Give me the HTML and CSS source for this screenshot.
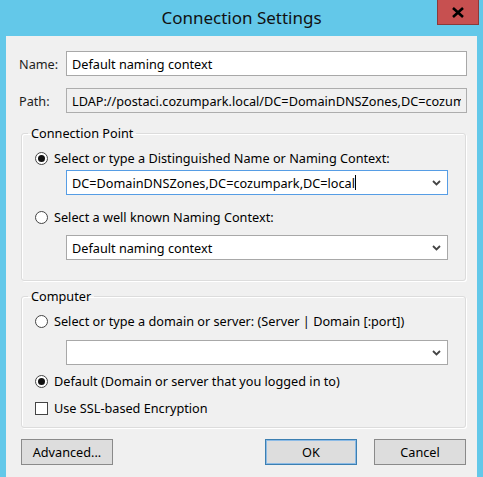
FILE: index.html
```html
<!DOCTYPE html>
<html lang="en">
<head>
  <meta charset="UTF-8">
  <meta name="viewport" content="width=device-width, initial-scale=1.0">
  <title>Connection Settings</title>
  <link rel="stylesheet" href="styles.css">
</head>
<body>

  <div class="window">
    <!-- Title bar -->
    <header class="titlebar">
      <span></span>
      <h1 class="title">Connection Settings</h1>
      <button class="close-button" type="button" aria-label="Close">
        <svg width="14" height="11" viewBox="0 0 14 11">
          <path d="M2 1 L12 10 M12 1 L2 10" stroke="#000" stroke-width="2.6" fill="none"/>
        </svg>
      </button>
    </header>

    <form class="client" onsubmit="return false;">
      <div class="field-row first">
        <label for="conn-name">Name:</label>
        <input type="text" id="conn-name" class="text-box" value="Default naming context">
      </div>
      <div class="field-row">
        <label for="conn-path">Path:</label>
        <input type="text" id="conn-path" class="text-box readonly" value="LDAP://postaci.cozumpark.local/DC=DomainDNSZones,DC=cozumpark,DC=local" readonly>
      </div>

      <!-- Connection Point -->
      <fieldset class="group group-point">
        <legend>Connection Point</legend>
        <label class="option">
          <input type="radio" name="point" checked>
          <span>Select or type a Distinguished Name or Naming Context:</span>
        </label>
        <div class="combo focused">
          <span class="combo-text">DC=DomainDNSZones,DC=cozumpark,DC=local<span class="caret"></span></span>
          <svg class="combo-arrow" width="9" height="6" viewBox="0 0 9 6">
            <path d="M1 1 L4.5 4.5 L8 1" stroke="#444" stroke-width="1.8" fill="none"/>
          </svg>
        </div>
        <label class="option">
          <input type="radio" name="point">
          <span>Select a well known Naming Context:</span>
        </label>
        <div class="combo">
          <span class="combo-text">Default naming context</span>
          <svg class="combo-arrow" width="9" height="6" viewBox="0 0 9 6">
            <path d="M1 1 L4.5 4.5 L8 1" stroke="#444" stroke-width="1.8" fill="none"/>
          </svg>
        </div>
      </fieldset>

      <!-- Computer -->
      <fieldset class="group group-computer">
        <legend>Computer</legend>
        <label class="option">
          <input type="radio" name="computer">
          <span>Select or type a domain or server: (Server | Domain [:port])</span>
        </label>
        <div class="combo">
          <span class="combo-text"></span>
          <svg class="combo-arrow" width="9" height="6" viewBox="0 0 9 6">
            <path d="M1 1 L4.5 4.5 L8 1" stroke="#444" stroke-width="1.8" fill="none"/>
          </svg>
        </div>
        <label class="option">
          <input type="radio" name="computer" checked>
          <span>Default (Domain or server that you logged in to)</span>
        </label>
        <label class="option check">
          <input type="checkbox">
          <span>Use SSL-based Encryption</span>
        </label>
      </fieldset>

      <div class="button-row">
        <button type="button" class="button">Advanced...</button>
        <button type="submit" class="button default ok">OK</button>
        <button type="button" class="button">Cancel</button>
      </div>
    </form>
  </div>

</body>
</html>
```

FILE: styles.css
```css
/* Window frame */
body {
  margin: 0;
  background-color: #63c8e9;
  font-family: 'Noto Sans', sans-serif;
  font-size: 12.7px;
  color: #000;
}

.window {
  width: 483px;
  height: 477px;
  display: flex;
  flex-direction: column;
}

.titlebar {
  height: 36px;
  display: grid;
  grid-template-columns: 1fr auto 1fr;
  align-items: start;
}

.title {
  margin: 7px 0 0;
  font-size: 17px;
  font-weight: 400;
  line-height: 22px;
  color: #111;
}

.close-button {
  justify-self: end;
  margin-right: 4px;
  width: 42px;
  height: 25px;
  padding: 0;
  border: 1px solid #8a3a3a;
  border-top: 0;
  background-color: #c75050;
  display: flex;
  align-items: center;
  justify-content: center;
}

/* Client area */
.client {
  flex: 1;
  margin: 0 6px;
  background-color: #f0f0f0;
  display: flex;
  flex-direction: column;
}

.field-row {
  display: flex;
  align-items: center;
  margin-top: 12px;
  padding-left: 13px;
}

.field-row.first {
  margin-top: 15px;
}

.field-row label {
  width: 47px;
  color: #1e1e1e;
}

.text-box {
  box-sizing: border-box;
  width: 401px;
  height: 25px;
  padding: 0 5px;
  border: 1px solid #a8a8a8;
  background-color: #fff;
  font-family: inherit;
  font-size: 12.7px;
  color: #000;
  outline: none;
}

.text-box.readonly {
  background-color: #f0f0f0;
  border-color: #adadad;
}

/* Group boxes */
.group {
  box-sizing: border-box;
  width: 445px;
  margin: 12px 0 0 15px;
  padding: 9px 0 0 0;
  border: 1px solid #dcdcdc;
  border-radius: 3px;
  box-shadow: inset 1px 1px 0 #fff, 1px 1px 0 #fff;
}

.group legend {
  margin-left: 6px;
  padding: 0 3px;
  line-height: 16px;
}

.group-point {
  height: 156px;
}

.group-computer {
  margin-top: 7px;
  height: 140px;
}

.option {
  display: flex;
  align-items: center;
  height: 16px;
  padding-left: 13px;
  gap: 6px;
}

.option input {
  appearance: none;
  margin: 0;
  width: 13px;
  height: 13px;
  border: 1px solid #444;
  border-radius: 50%;
  background-color: #fff;
  display: grid;
  place-content: center;
}

.option input:checked::before {
  content: "";
  width: 7px;
  height: 7px;
  border-radius: 50%;
  background-color: #111;
}

.option.check input {
  border-radius: 0;
}

/* Combo boxes */
.combo {
  box-sizing: border-box;
  width: 382px;
  height: 25px;
  margin: 4px 0 0 44px;
  padding: 0 6px 0 5px;
  border: 1px solid #a8a8a8;
  background-color: #fff;
  display: flex;
  align-items: center;
  justify-content: space-between;
}

.combo.focused {
  border-color: #569de5;
}

.combo-text {
  display: flex;
  align-items: center;
}

.caret {
  width: 1px;
  height: 15px;
  background-color: #000;
}

.group-point .combo + .option {
  margin-top: 14px;
}

.group-point .option + .combo:last-child {
  margin-top: 10px;
}

.group-computer .option + .combo {
  margin-top: 11px;
}

.group-computer .combo + .option {
  margin-top: 8px;
}

.option + .option {
  margin-top: 11px;
}

/* Dialog buttons */
.button-row {
  display: flex;
  margin-top: 11px;
  padding: 0 11px 0 15px;
}

.button {
  box-sizing: border-box;
  width: 92px;
  height: 26px;
  border: 1px solid #8a8a8a;
  background-color: #dddddd;
  font-family: inherit;
  font-size: 12.7px;
  color: #000;
  padding: 0;
}

.button.default {
  border-color: #3c7fb1;
  box-shadow: inset 0 0 0 1px #8cbbe6;
}

.button.ok {
  margin-left: auto;
  margin-right: 17px;
}
```
